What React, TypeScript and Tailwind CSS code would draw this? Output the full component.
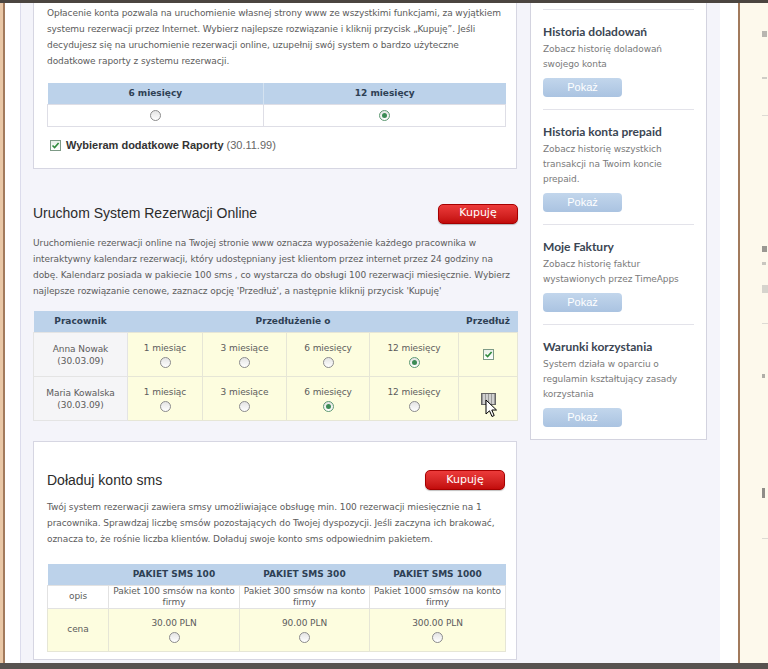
import React from 'react';

const body = "font-['DejaVu_Sans',sans-serif] text-[9px] text-[#5c5c5c] tracking-[-0.08px]";
const head = "font-['DejaVu_Sans',sans-serif] text-[9px] font-bold text-[#2e4054]";

function Radio({ checked = false }: { checked?: boolean }) {
  return (
    <span
      className={`inline-flex w-[11px] h-[11px] rounded-full border items-center justify-center bg-linear-to-b from-[#e4e4e4] to-white ${
        checked ? 'border-[#5f9a74]' : 'border-[#8c8c8c]'
      }`}
    >
      {checked && <span className="w-[5px] h-[5px] rounded-full bg-[#3b8b55]" />}
    </span>
  );
}

function Check() {
  return (
    <span className="inline-flex w-[11px] h-[11px] border border-[#7d9a86] bg-linear-to-b from-[#e8efe8] to-white items-center justify-center">
      <svg width="9" height="9" viewBox="0 0 9 9">
        <path d="M1.5 4.5 L3.6 6.6 L7.6 2" stroke="#2f8a3c" strokeWidth="1.6" fill="none" />
      </svg>
    </span>
  );
}

function BuyButton() {
  return (
    <button className="w-[80px] h-[20px] rounded-[5px] bg-linear-to-b from-[#ec3a3a] to-[#c20a0a] border border-[#a50000] text-white text-[11px] font-['DejaVu_Sans',sans-serif] shadow-[0_1px_1px_rgba(0,0,0,0.25)]">
      Kupuję
    </button>
  );
}

function ShowButton() {
  return (
    <button className="w-[79px] h-[19px] rounded-[4px] bg-linear-to-b from-[#c2d6ec] to-[#aac3e1] text-white text-[11px] font-['Liberation_Sans',sans-serif]">
      Pokaż
    </button>
  );
}

function SideItem({ title, lines }: { title: string; lines: string[] }) {
  return (
    <div className="border-t border-[#e3e3ea] pt-[14px] pb-[12px]">
      <div className="font-['Lato',sans-serif] font-bold text-[12px] leading-[16px] text-[#3b4653]">{title}</div>
      <div className={`${body} text-[#7a7a7a] leading-[15px] mt-[2px]`}>
        {lines.map((l) => (
          <div key={l}>{l}</div>
        ))}
      </div>
      <div className="mt-[6px] flex">
        <ShowButton />
      </div>
    </div>
  );
}

function Cell({ label, checked = false }: { label: string; checked?: boolean }) {
  return (
    <td className="border border-[#e6e6d6] bg-[#fdfddf] text-center align-middle">
      <div className={`${body} leading-[12px]`}>{label}</div>
      <div className="mt-[3px] flex justify-center">
        <Radio checked={checked} />
      </div>
    </td>
  );
}

export default function App() {
  return (
    <div className="w-[768px] h-[669px] overflow-hidden flex flex-col bg-[#fdf9ec]">
      <div className="h-[3px] bg-[#4b4540]" />
      <div className="flex-1 flex min-h-0">
        <div className="w-[3px] bg-[#e9c7a6]" />
        <div className="w-[2px] bg-[#a27a5c]" />
        {/* page */}
        <div className="w-[733px] bg-white pl-[15px] pr-[18px] flex">
          <div className="flex-1 bg-[#f4f4fa] border-l border-[#dcdcec] flex pl-[12px] pr-[13px] gap-[13px] overflow-hidden">
            {/* main column */}
            <div className="w-[484px] flex flex-col">
              {/* card 1 */}
              <div className="bg-white border border-t-0 border-[#d6d6e2] pl-[13px] pr-[12px] pt-[2px] pb-[15px]">
                <div className={`${body} leading-[16px] whitespace-nowrap`}>
                  Opłacenie konta pozwala na uruchomienie własnej strony www ze wszystkimi funkcjami, za wyjątkiem
                  <br />
                  systemu rezerwacji przez Internet. Wybierz najlepsze rozwiązanie i kliknij przycisk „Kupuję”. Jeśli
                  <br />
                  decydujesz się na uruchomienie rezerwacji online, uzupełnij swój system o bardzo użyteczne
                  <br />
                  dodatkowe raporty z systemu rezerwacji.
                </div>
                <table className="mt-[14px] w-[458px] table-fixed border-collapse">
                  <colgroup>
                    <col className="w-[216px]" />
                    <col className="w-[242px]" />
                  </colgroup>
                  <tbody>
                    <tr className="h-[21px] bg-[#bcd2ea]">
                      <th className={`${head} border-r border-[#d4e2f0]`}>6 miesięcy</th>
                      <th className={head}>12 miesięcy</th>
                    </tr>
                    <tr className="h-[22px]">
                      <td className="border border-[#dedee6] text-center">
                        <div className="flex justify-center">
                          <Radio />
                        </div>
                      </td>
                      <td className="border border-[#dedee6] text-center">
                        <div className="flex justify-center">
                          <Radio checked />
                        </div>
                      </td>
                    </tr>
                  </tbody>
                </table>
                <div className="mt-[12px] flex items-center gap-[5px] pl-[3px] h-[14px]">
                  <Check />
                  <span className="font-['Liberation_Sans',sans-serif] text-[11px] font-bold text-[#333]">
                    Wybieram dodatkowe Raporty
                  </span>
                  <span className="font-['Liberation_Sans',sans-serif] text-[11px] text-[#666] -ml-[2px]">(30.11.99)</span>
                </div>
              </div>

              {/* section 2 */}
              <div className="pt-[35px] pb-[20px]">
                <div className="flex items-center justify-between h-[20px]">
                  <h2 className="font-['Liberation_Sans',sans-serif] text-[14px] text-[#2b2b2b]">
                    Uruchom System Rezerwacji Online
                  </h2>
                  <div className="-mr-[1px] flex">
                    <BuyButton />
                  </div>
                </div>
                <div className={`${body} leading-[16px] whitespace-nowrap mt-[11px]`}>
                  Uruchomienie rezerwacji online na Twojej stronie www oznacza wyposażenie każdego pracownika w
                  <br />
                  interaktywny kalendarz rezerwacji, który udostępniany jest klientom przez internet przez 24 godziny na
                  <br />
                  dobę. Kalendarz posiada w pakiecie 100 sms , co wystarcza do obsługi 100 rezerwacji miesięcznie. Wybierz
                  <br />
                  najlepsze rozwiązanie cenowe, zaznacz opcję 'Przedłuż', a następnie kliknij przycisk 'Kupuję'
                </div>
                <table className="mt-[12px] w-[484px] table-fixed border-collapse">
                  <colgroup>
                    <col className="w-[94px]" />
                    <col className="w-[75px]" />
                    <col className="w-[84px]" />
                    <col className="w-[83px]" />
                    <col className="w-[89px]" />
                    <col className="w-[59px]" />
                  </colgroup>
                  <tbody>
                    <tr className="h-[22px] bg-[#bcd2ea]">
                      <th className={head}>Pracownik</th>
                      <th colSpan={4} className={head}>
                        Przedłużenie o
                      </th>
                      <th className={head}>Przedłuż</th>
                    </tr>
                    <tr className="h-[44px]">
                      <td className={`border border-[#e4e4e4] bg-[#f5f5f7] text-center ${body} leading-[12px]`}>
                        Anna Nowak
                        <br />
                        (30.03.09)
                      </td>
                      <Cell label="1 miesiąc" />
                      <Cell label="3 miesiące" />
                      <Cell label="6 miesięcy" />
                      <Cell label="12 miesięcy" checked />
                      <td className="border border-[#e6e6d6] bg-[#fdfddf] text-center align-middle">
                        <div className="flex justify-center">
                          <Check />
                        </div>
                      </td>
                    </tr>
                    <tr className="h-[44px]">
                      <td className={`border border-[#e4e4e4] bg-[#f5f5f7] text-center ${body} leading-[12px]`}>
                        Maria Kowalska
                        <br />
                        (30.03.09)
                      </td>
                      <Cell label="1 miesiąc" />
                      <Cell label="3 miesiące" />
                      <Cell label="6 miesięcy" checked />
                      <Cell label="12 miesięcy" />
                      <td className="border border-[#e6e6d6] bg-[#fdfddf] text-center align-middle relative">
                        <div className="flex justify-center">
                          <span className="w-[15px] h-[12px] border border-[#666] bg-[repeating-linear-gradient(90deg,#9a9a9a_0px,#9a9a9a_1px,#d0d0d0_1px,#d0d0d0_3px)]" />
                        </div>
                        <svg
                          className="absolute left-[26px] top-[22px]"
                          width="13"
                          height="19"
                          viewBox="0 0 13 19"
                        >
                          <path
                            d="M1 1 L1 15 L4.5 11.8 L7 17.5 L9.2 16.5 L6.8 11 L11.5 11 Z"
                            fill="white"
                            stroke="black"
                            strokeWidth="1"
                            strokeLinejoin="round"
                          />
                        </svg>
                      </td>
                    </tr>
                  </tbody>
                </table>
              </div>

              {/* card 3 */}
              <div className="bg-white border border-[#d6d6e2] pl-[13px] pr-[11px] pt-[28px] pb-[7px]">
                <div className="flex items-center justify-between h-[20px]">
                  <h2 className="font-['Liberation_Sans',sans-serif] text-[14px] text-[#2b2b2b]">Doładuj konto sms</h2>
                  <div className="flex">
                    <BuyButton />
                  </div>
                </div>
                <div className={`${body} leading-[16px] whitespace-nowrap mt-[9px]`}>
                  Twój system rezerwacji zawiera smsy umożliwiające obsługę min. 100 rezerwacji miesięcznie na 1
                  <br />
                  pracownika. Sprawdzaj liczbę smsów pozostających do Twojej dyspozycji. Jeśli zaczyna ich brakować,
                  <br />
                  oznacza to, że rośnie liczba klientów. Doładuj swoje konto sms odpowiednim pakietem.
                </div>
                <table className="mt-[17px] w-[458px] table-fixed border-collapse">
                  <colgroup>
                    <col className="w-[61px]" />
                    <col className="w-[131px]" />
                    <col className="w-[130px]" />
                    <col className="w-[136px]" />
                  </colgroup>
                  <tbody>
                    <tr className="h-[21px] bg-[#bcd2ea]">
                      <th />
                      <th className={head}>PAKIET SMS 100</th>
                      <th className={head}>PAKIET SMS 300</th>
                      <th className={head}>PAKIET SMS 1000</th>
                    </tr>
                    <tr className="h-[23px]">
                      <td className={`border border-[#e2e2e2] text-center ${body} leading-[11px]`}>opis</td>
                      {['100', '300', '1000'].map((n) => (
                        <td key={n} className={`border border-[#e2e2e2] text-center ${body} leading-[11px]`}>
                          Pakiet {n} smsów na konto
                          <br />
                          firmy
                        </td>
                      ))}
                    </tr>
                    <tr className="h-[43px] bg-[#fdfddf]">
                      <td className={`border border-[#e6e6d6] text-center ${body}`}>cena</td>
                      {['30.00 PLN', '90.00 PLN', '300.00 PLN'].map((p) => (
                        <Cell key={p} label={p} />
                      ))}
                    </tr>
                  </tbody>
                </table>
              </div>
            </div>

            {/* sidebar */}
            <div className="w-[177px] self-start bg-white border border-t-0 border-[#d3d3df] px-[12px] pt-[6px]">
              <SideItem title="Historia doladowań" lines={['Zobacz historię doladowań', 'swojego konta']} />
              <SideItem
                title="Historia konta prepaid"
                lines={['Zobacz historię wszystkich', 'transakcji na Twoim koncie', 'prepaid.']}
              />
              <SideItem title="Moje Faktury" lines={['Zobacz historię faktur', 'wystawionych przez TimeApps']} />
              <SideItem
                title="Warunki korzystania"
                lines={['System działa w oparciu o', 'regulamin kształtujący zasady', 'korzystania']}
              />
            </div>
          </div>
        </div>
        <div className="w-[2px] bg-[#a27a5c]" />
        {/* next page peeking in at the edge */}
        <div className="flex-1 overflow-hidden pl-[22px] pt-[28px] flex flex-col items-start">
          <span className="w-[5px] h-[6px] bg-[#b8b6b0]" />
          <span className="mt-[40px] w-[5px] h-[2px] bg-[#cfcdc6]" />
          <span className="mt-[36px] w-[6px] h-[1px] bg-[#dddbd4]" />
          <span className="mt-[130px] w-[5px] h-[6px] bg-[#9a9892]" />
          <span className="mt-[10px] w-[4px] h-[3px] bg-[#c9c7c0]" />
          <span className="mt-[20px] w-[6px] h-[8px] bg-[#d6d4cd]" />
          <span className="mt-[30px] w-[6px] h-[1px] bg-[#dddbd4]" />
          <span className="mt-[50px] w-[3px] h-[4px] bg-[#b0aea8]" />
          <span className="mt-[110px] w-[3px] h-[10px] bg-[#8f8d88]" />
          <span className="mt-[40px] w-[6px] h-[1px] bg-[#dddbd4]" />
        </div>
      </div>
      <div className="h-[6px] bg-[#575350]" />
    </div>
  );
}
